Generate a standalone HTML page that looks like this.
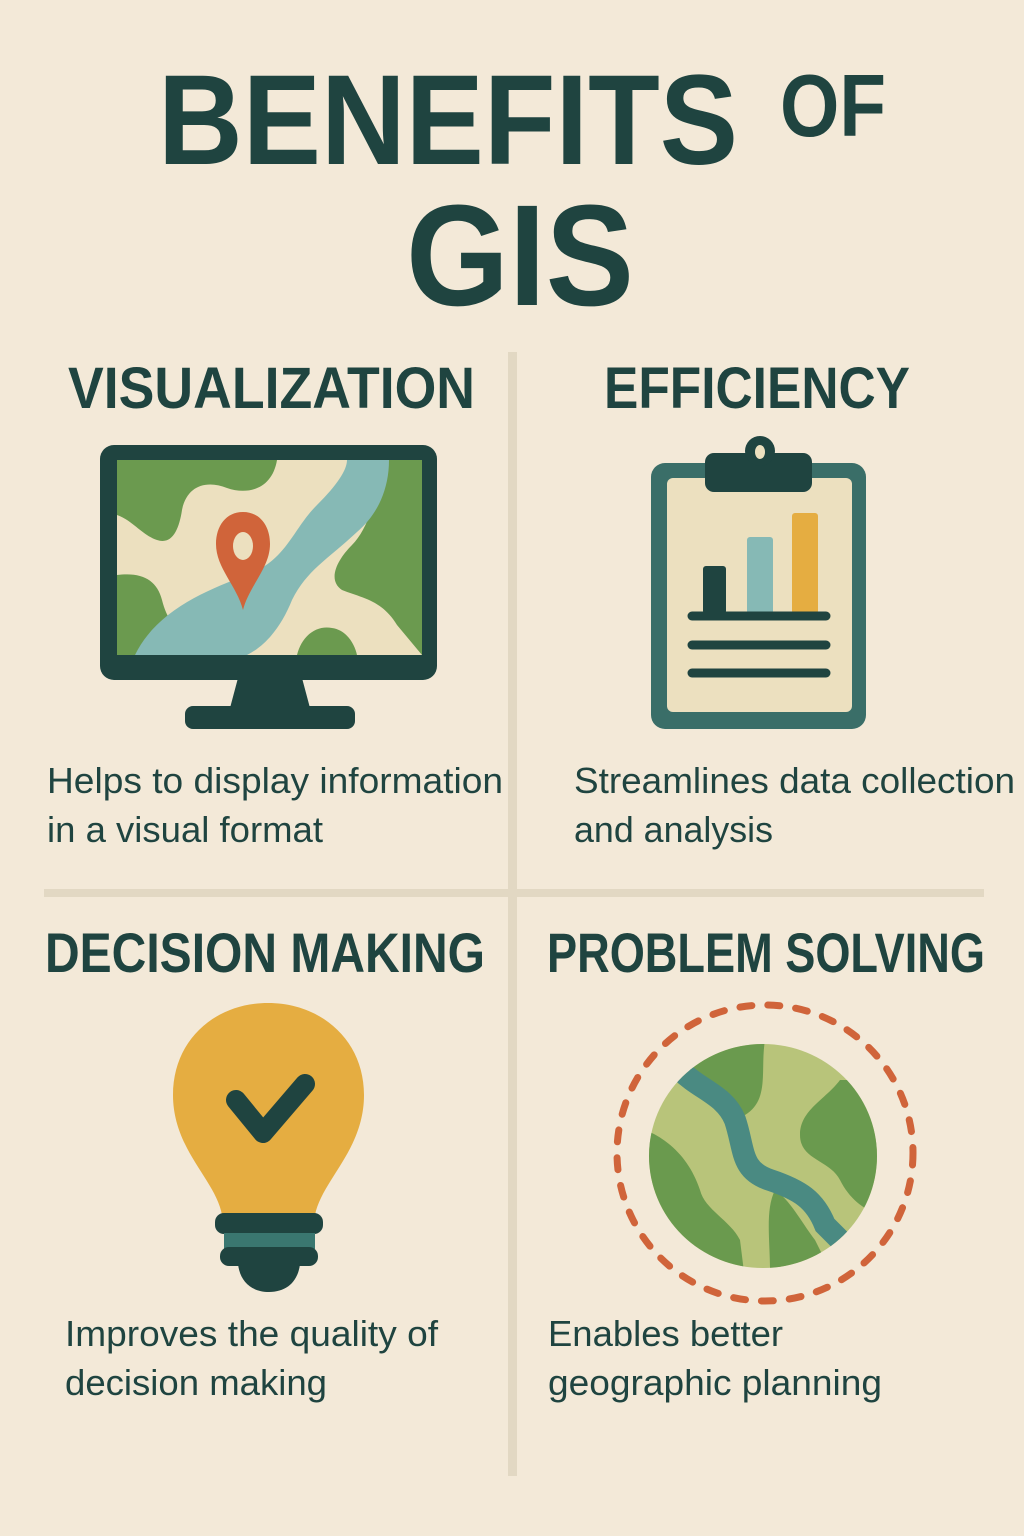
<!DOCTYPE html>
<html><head><meta charset="utf-8"><style>
html,body{margin:0;padding:0;background:#f3e9d8;}
svg{display:block}
</style></head><body>
<svg width="1024" height="1536" viewBox="0 0 1024 1536" xmlns="http://www.w3.org/2000/svg">
<rect width="1024" height="1536" fill="#f3e9d8"/>
<g font-family="Liberation Sans, sans-serif" font-weight="bold" fill="#1f4440">
<text x="158" y="164" font-size="128" textLength="580" lengthAdjust="spacingAndGlyphs">BENEFITS</text>
<text x="780" y="136" font-size="88" textLength="106" lengthAdjust="spacingAndGlyphs">OF</text>
<text x="406" y="305" font-size="144" textLength="228" lengthAdjust="spacingAndGlyphs">GIS</text>
<text x="68" y="408" font-size="58" textLength="407" lengthAdjust="spacingAndGlyphs">VISUALIZATION</text>
<text x="604" y="408" font-size="58" textLength="306" lengthAdjust="spacingAndGlyphs">EFFICIENCY</text>
<text x="45" y="972" font-size="56" textLength="440" lengthAdjust="spacingAndGlyphs">DECISION MAKING</text>
<text x="547" y="972" font-size="56" textLength="438" lengthAdjust="spacingAndGlyphs">PROBLEM SOLVING</text>
</g>
<g font-family="Liberation Sans, sans-serif" font-size="36" fill="#1f4440">
<text x="47" y="793" textLength="456" lengthAdjust="spacingAndGlyphs">Helps to display information</text>
<text x="47" y="842" textLength="276" lengthAdjust="spacingAndGlyphs">in a visual format</text>
<text x="574" y="793" textLength="441" lengthAdjust="spacingAndGlyphs">Streamlines data collection</text>
<text x="574" y="842" textLength="199" lengthAdjust="spacingAndGlyphs">and analysis</text>
<text x="65" y="1346" textLength="373" lengthAdjust="spacingAndGlyphs">Improves the quality of</text>
<text x="65" y="1395" textLength="262" lengthAdjust="spacingAndGlyphs">decision making</text>
<text x="548" y="1346" textLength="235" lengthAdjust="spacingAndGlyphs">Enables better</text>
<text x="548" y="1395" textLength="334" lengthAdjust="spacingAndGlyphs">geographic planning</text>
</g>
<rect x="508" y="352" width="9" height="1124" fill="#e2d8c3"/>
<rect x="44" y="889" width="940" height="8" fill="#e2d8c3"/>

<rect x="100" y="445" width="337" height="235" rx="14" fill="#1f4440"/>
<path d="M238 678 L302 678 L310 708 L230 708 Z" fill="#1f4440"/>
<rect x="185" y="706" width="170" height="23" rx="8" fill="#1f4440"/>
<svg x="117" y="460" width="305" height="195" viewBox="0 0 305 195">
<rect width="305" height="195" fill="#ece0bf"/>
<path d="M0 0 L160 0 C155 30 130 35 110 28 C90 20 70 25 65 50 C62 70 55 85 40 80 C25 75 15 60 0 55 Z" fill="#6b9a4f"/>
<path d="M0 115 C25 112 40 120 45 140 C50 160 60 175 80 172 L70 195 L0 195 Z" fill="#6b9a4f"/>
<path d="M305 0 L265 0 C260 40 250 70 235 85 C220 100 210 120 225 130 C245 138 265 140 280 165 L305 195 Z" fill="#6b9a4f"/>
<path d="M180 195 C185 175 200 165 215 168 C230 170 238 185 240 195 Z" fill="#6b9a4f"/>
<path d="M18 195 C40 150 90 130 130 115 C170 100 175 70 200 45 C220 25 230 10 230 0 L272 0 C272 30 260 55 240 72 C210 100 190 110 175 140 C165 165 150 185 130 195 Z" fill="#86b9b5"/>
<path d="M126 52 C143 52 153 66 153 84 C153 108 132 126 126 150 C120 126 99 108 99 84 C99 66 109 52 126 52 Z" fill="#d0643a"/>
<ellipse cx="126" cy="86" rx="10" ry="14" fill="#ece0bf"/>
</svg>

<rect x="651" y="463" width="215" height="266" rx="14" fill="#3a6e68"/>
<rect x="667" y="478" width="185" height="234" rx="6" fill="#ece0bf"/>
<rect x="705" y="453" width="107" height="39" rx="9" fill="#1f4440"/>
<circle cx="760" cy="451" r="15" fill="#1f4440"/>
<ellipse cx="760" cy="452" rx="5" ry="7" fill="#ece0bf"/>
<rect x="703" y="566" width="23" height="48" rx="3" fill="#1f4440"/>
<rect x="747" y="537" width="26" height="77" rx="3" fill="#86b9b5"/>
<rect x="792" y="513" width="26" height="101" rx="3" fill="#e5ad41"/>
<g stroke="#1f4440" stroke-width="9" stroke-linecap="round">
<line x1="692" y1="616" x2="826" y2="616"/>
<line x1="692" y1="645" x2="826" y2="645"/>
<line x1="692" y1="673" x2="826" y2="673"/>
</g>

<path d="M222 1215 C216 1180 173 1150 173 1095 C173 1040 215 1003 268 1003 C321 1003 364 1040 364 1095 C364 1150 322 1180 315 1215 Z" fill="#e5ad41"/>
<path d="M236 1100 L263 1133 L305 1084" fill="none" stroke="#1f4440" stroke-width="20" stroke-linecap="round" stroke-linejoin="round"/>
<rect x="215" y="1213" width="108" height="21" rx="9" fill="#1f4440"/>
<rect x="224" y="1233" width="91" height="16" fill="#3a7770"/>
<rect x="220" y="1247" width="98" height="19" rx="9" fill="#1f4440"/>
<path d="M238 1264 L300 1264 C298 1282 286 1292 269 1292 C252 1292 240 1282 238 1264 Z" fill="#1f4440"/>

<circle cx="765" cy="1153" r="148" fill="none" stroke="#d0643a" stroke-width="7" stroke-dasharray="12 16" stroke-linecap="round"/>
<clipPath id="gc"><ellipse cx="763" cy="1156" rx="114" ry="112"/></clipPath>
<g clip-path="url(#gc)">
<rect x="640" y="1040" width="250" height="240" fill="#b8c47a"/>
<path d="M690 1060 C720 1040 750 1035 765 1040 C760 1070 770 1100 745 1115 C725 1110 710 1095 690 1080 Z" fill="#6a9a4e"/>
<path d="M840 1080 C825 1100 800 1110 800 1135 C800 1160 830 1160 840 1180 C850 1200 865 1210 880 1215 L880 1080 Z" fill="#6a9a4e"/>
<path d="M645 1130 C670 1140 690 1160 700 1190 C705 1210 730 1220 740 1240 L745 1280 L640 1280 Z" fill="#6a9a4e"/>
<path d="M775 1190 C790 1200 800 1220 815 1240 L830 1270 L770 1270 C770 1240 765 1210 775 1190 Z" fill="#6a9a4e"/>
<path d="M680 1070 C700 1090 725 1095 735 1120 C745 1150 740 1170 770 1180 C800 1190 815 1200 825 1225 L840 1240" fill="none" stroke="#4a8a82" stroke-width="22"/>
</g>
</svg>
</body></html>
